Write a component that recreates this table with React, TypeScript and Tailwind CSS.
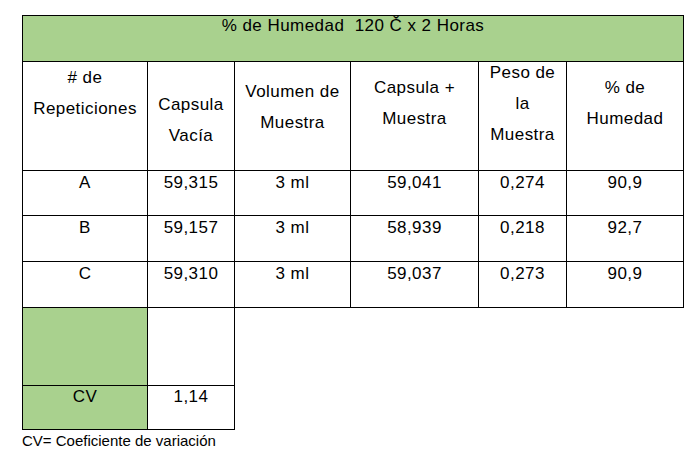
import React from "react";

const G = "bg-[#a9d18e]";

export default function App() {
  const rows = [
    ["A", "59,315", "3 ml", "59,041", "0,274", "90,9"],
    ["B", "59,157", "3 ml", "58,939", "0,218", "92,7"],
    ["C", "59,310", "3 ml", "59,037", "0,273", "90,9"],
  ];
  const cell = "border-l border-t border-black text-center whitespace-nowrap";
  return (
    <div
      className="w-[693px] h-[452px] bg-white text-black pt-[15px] pl-[22px]"
      style={{ fontFamily: '"Liberation Sans", Arial, sans-serif' }}
    >
      <div className="grid grid-cols-[125px_87px_116px_128px_88px_118px] grid-rows-[46px_109px_45px_46px_46px_78px_45px] text-[17px] tracking-[0.45px]">
        <div className={`col-span-6 border-l border-t border-r border-black ${G} text-center leading-[20px]`}>
          % de Humedad{"\u00a0"} 120 Č x 2 Horas
        </div>

        <div className={`${cell} leading-[31px]`}>
          # de
          <br />
          Repeticiones
        </div>
        <div className={`${cell} leading-[31px] pt-[27px]`}>
          Capsula
          <br />
          Vacía
        </div>
        <div className={`${cell} leading-[31px] pt-[14px]`}>
          Volumen de
          <br />
          Muestra
        </div>
        <div className={`${cell} leading-[31px] pt-[10px]`}>
          Capsula +
          <br />
          Muestra
        </div>
        <div className={`${cell} leading-[31px]`}>
          <div className="-mt-[5px]">
            Peso de
            <br />
            la
            <br />
            Muestra
          </div>
        </div>
        <div className={`${cell} border-r leading-[31px] pt-[10px]`}>
          % de
          <br />
          Humedad
        </div>

        {rows.map((r) =>
          r.map((v, i) => (
            <div
              key={r[0] + i}
              className={`${cell} leading-[20px] pt-[2px] ${i === 5 ? "border-r" : ""}`}
            >
              {v}
            </div>
          ))
        )}

        <div className={`${cell} ${G}`}></div>
        <div className={`${cell}`}></div>
        <div className="col-span-4 row-span-2 border-l border-t border-black"></div>

        <div className={`${cell} ${G} border-b leading-[20px] pt-[1px]`}>CV</div>
        <div className={`${cell} border-b leading-[20px] pt-[1px]`}>1,14</div>
      </div>
      <div className="text-[15px] leading-[20px] mt-[1px]">CV= Coeficiente de variación</div>
    </div>
  );
}
